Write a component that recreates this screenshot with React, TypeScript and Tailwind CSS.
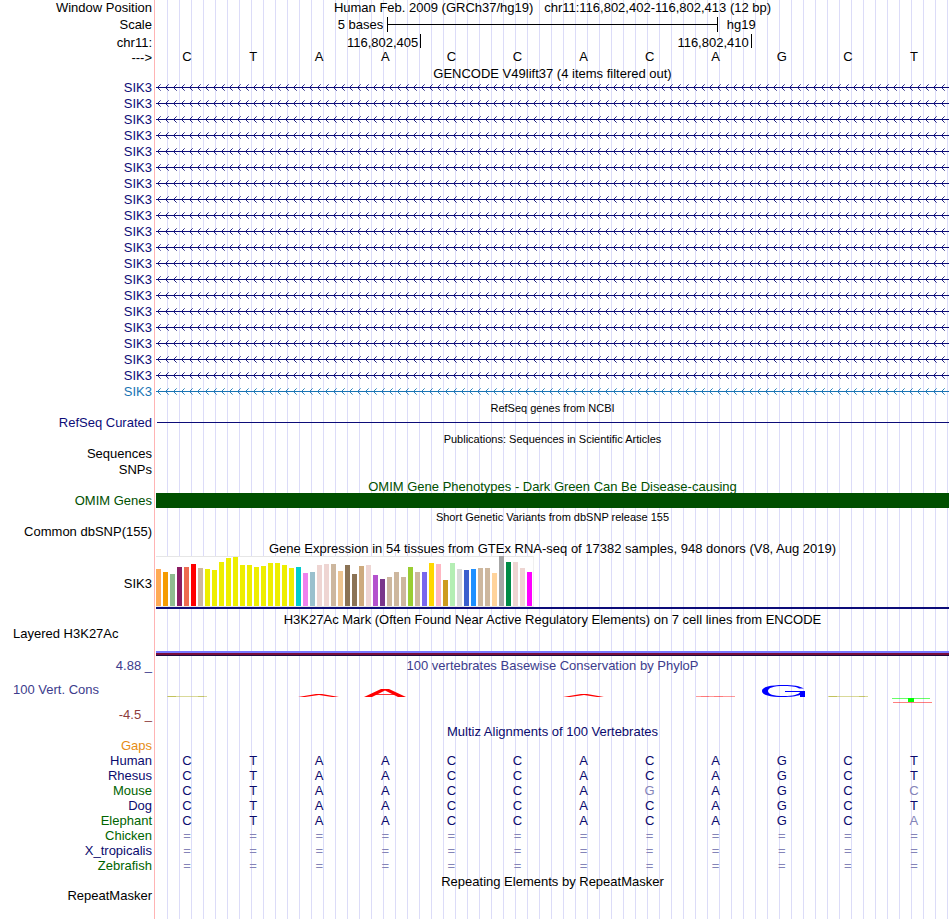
import React from 'react'

const bases = ["C","T","A","A","C","C","A","C","A","G","C","T"]

// one row per SIK3 transcript, the last one is non-coding
const transcripts = Array.from({ length: 20 }, (_, i) => (i === 19 ? "#1874b4" : "#0c0c78"))

const tissues: [number, string][] = [
  [37,"#ffaa55"],[34,"#f59b00"],[32,"#8fbc8f"],[39,"#8b1c62"],[39,"#ee6a50"],[42,"#ff0000"],
  [38,"#cdb79e"],[37,"#eeee00"],[36,"#eeee00"],[44,"#eeee00"],[48,"#eeee00"],[49,"#eeee00"],
  [41,"#eeee00"],[41,"#eeee00"],[39,"#eeee00"],[40,"#eeee00"],[43,"#eeee00"],[43,"#eeee00"],
  [41,"#eeee00"],[38,"#eeee00"],[39,"#00cdcd"],[33,"#ee82ee"],[34,"#9ac0cd"],[41,"#eed5d2"],
  [42,"#eed5d2"],[42,"#cdb79e"],[35,"#eec591"],[41,"#8b7355"],[32,"#8b7355"],[40,"#cdaa7d"],
  [41,"#eed5d2"],[31,"#b452cd"],[27,"#7a378b"],[29,"#cdb79e"],[34,"#cdb79e"],[29,"#cdb79e"],
  [39,"#9acd32"],[34,"#cdb79e"],[34,"#7a67ee"],[43,"#ffd700"],[42,"#ffb6c1"],[26,"#cd9b1d"],
  [43,"#b4eeb4"],[37,"#d9d9d9"],[36,"#3a5fcd"],[37,"#1e90ff"],[38,"#cdb79e"],[38,"#cdb79e"],
  [33,"#ffd39b"],[50,"#a6a6a6"],[44,"#008b45"],[44,"#eed5d2"],[38,"#eed5d2"],[34,"#ff00ff"],
]

const navy = "text-[#0a0a6e]"
const green = "text-[#006400]"

const species = [
  { name: "Human", color: navy, seq: "CTAACCACAGCT" },
  { name: "Rhesus", color: navy, seq: "CTAACCACAGCT" },
  { name: "Mouse", color: green, seq: "CTAACCAGAGCC" },
  { name: "Dog", color: navy, seq: "CTAACCACAGCT" },
  { name: "Elephant", color: green, seq: "CTAACCACAGCA" },
  { name: "Chicken", color: green, seq: "============" },
  { name: "X_tropicalis", color: navy, seq: "============" },
  { name: "Zebrafish", color: green, seq: "============" },
]

function Row({ label, labelClass = "", className = "h-4", children }: {
  label?: React.ReactNode
  labelClass?: string
  className?: string
  children?: React.ReactNode
}) {
  return (
    <div className={`flex ${className}`}>
      <div className={`w-[156px] shrink-0 pr-1 text-right ${labelClass}`}>{label}</div>
      <div className="min-w-0 flex-1">{children}</div>
    </div>
  )
}

function Title({ children, className = "h-[15px] leading-[15px]", label, labelClass }: {
  children: React.ReactNode
  className?: string
  label?: string
  labelClass?: string
}) {
  return (
    <Row className={className} label={label} labelClass={labelClass}>
      <h2 className="whitespace-pre text-center">{children}</h2>
    </Row>
  )
}

// intron line with strand arrows pointing left
function Intron({ color, id }: { color: string; id: string }) {
  return (
    <svg className="block h-4 w-full" shapeRendering="crispEdges">
      <defs>
        <pattern id={id} width="8" height="16" patternUnits="userSpaceOnUse">
          <path d="M2 6h1v1h-1zM2 8h1v1h-1zM3 5h1v1h-1zM3 9h1v1h-1z" fill={color} fillOpacity="0.9" />
          <path d="M4 4h1v1h-1zM4 10h1v1h-1z" fill={color} fillOpacity="0.6" />
        </pattern>
      </defs>
      <rect width="100%" height="16" fill={`url(#${id})`} />
      <rect y="7" width="100%" height="1" fill={color} />
    </svg>
  )
}

// conservation score marks, one drawing per base
function Mark({ index }: { index: number }) {
  return (
    <svg className="h-[49px] w-12 shrink-0" viewBox="0 0 48 49" fill="none">
      {(index === 0 || index === 10) && (
        <>
          <line x1="3" x2="43" y1="22.5" y2="22.5" stroke="#b4b432" strokeOpacity="0.5" />
          <line x1="4" x2="12" y1="22.5" y2="22.5" stroke="#a0a000" strokeOpacity="0.4" />
          <line x1="34" x2="40" y1="22.5" y2="22.5" stroke="#a0a000" strokeOpacity="0.3" />
        </>
      )}
      {(index === 2 || index === 6) && (
        <polygon points="2,23 20,20 26,20 43,23 36,23 23,21 9,23" fill="#ff0000" />
      )}
      {index === 3 && (
        <>
          <polygon points="2,23 19,15 27,15 44,23 36,23 23,16.5 10,23" fill="#ff0000" />
          <line x1="14" x2="32" y1="20.5" y2="20.5" stroke="#ff0000" strokeOpacity="0.8" />
        </>
      )}
      {index === 8 && (
        <>
          <line x1="3" x2="42" y1="22.5" y2="22.5" stroke="#ff0000" strokeOpacity="0.4" />
          <line x1="8" x2="16" y1="22.5" y2="22.5" stroke="#ff0000" strokeOpacity="0.2" />
          <line x1="21" x2="30" y1="22.5" y2="22.5" stroke="#ff0000" strokeOpacity="0.2" />
        </>
      )}
      {index === 9 && (
        <path
          fill="#0000ff"
          fillRule="evenodd"
          d="M45 14.500C41 12 34 11 25 11C11 11 3 13 3 17C3 21 11 23 24 23C32 23 37 22.300 41 21V23H46V17H26V18H41C40 20.500 34 22 25 22C14 22 9 20 9 17C9 14 14 12 25 12C34 12 38 13 40 14.500Z"
        />
      )}
      {index === 11 && (
        <>
          <line x1="1" x2="39" y1="24.5" y2="24.5" stroke="#00ff00" strokeOpacity="0.6" />
          <rect x="17" y="24" width="6" height="4" fill="#00ff00" />
          <line x1="2" x2="41" y1="28.5" y2="28.5" stroke="#ff0000" strokeOpacity="0.5" />
        </>
      )}
    </svg>
  )
}

function App() {
  return (
    <main className="min-h-screen bg-white bg-[linear-gradient(90deg,#ffb4b4_1px,transparent_1px),repeating-linear-gradient(90deg,#dcdcf8_0px,#dcdcf8_1px,transparent_1px,transparent_12px)] bg-[position:154px_0,167px_0] bg-no-repeat pr-px font-['Liberation_Sans',Arial,sans-serif] text-[13px] leading-4 text-black">
      <Title className="h-4" label="Window Position">
        Human Feb. 2009 (GRCh37/hg19)   chr11:116,802,402-116,802,413 (12 bp)
      </Title>
      <Row className="h-[18px] leading-[18px]" label="Scale">
        <div className="flex">
          <div className="w-[29.17%] pr-1 text-right">5 bases</div>
          <div className="flex h-4 w-5/12 items-end">
            <div className="flex h-[15px] w-full items-center border-x border-black">
              <div className="h-px w-full bg-black" />
            </div>
          </div>
          <div className="pl-[9px]">hg19</div>
        </div>
      </Row>
      <Row className="h-4 leading-[18px]" label="chr11:">
        <div className="flex">
          <div className="w-1/3 pr-0.5 text-right">116,802,405</div>
          <div className="h-[14px] w-5/12 border-l border-black pr-0.5 text-right">116,802,410</div>
          <div className="h-[14px] border-l border-black" />
        </div>
      </Row>
      <Row label="--->">
        <div className="grid grid-cols-12 text-center leading-[14px]">
          {bases.map((base, i) => (
            <span key={i} className="pr-1">{base}</span>
          ))}
        </div>
      </Row>

      <Title className="h-[14px] leading-4">GENCODE V49lift37 (4 items filtered out)</Title>
      {transcripts.map((color, i) => (
        <Row key={i} label="SIK3" labelClass={i === 19 ? "text-[#1874b4]" : "text-[#0c0c78]"}>
          <Intron color={color} id={`intron-${i}`} />
        </Row>
      ))}

      <Title className="h-[15px] text-[11px] leading-4">RefSeq genes from NCBI</Title>
      <Row label="RefSeq Curated" labelClass="text-[#0c0c78]">
        <div className="ml-px pt-[7px]">
          <div className="h-px bg-[#0c0c78]" />
        </div>
      </Row>

      <Title className="h-[15px] text-[11px] leading-4">Publications: Sequences in Scientific Articles</Title>
      <Row label="Sequences" />
      <Row label="SNPs" />

      <Title className="h-[15px] leading-[18px] text-[#005000]">OMIM Gene Phenotypes - Dark Green Can Be Disease-causing</Title>
      <Row className="h-[15px] leading-[15px]" label="OMIM Genes" labelClass="text-[#005000]">
        <div className="h-full bg-[#005000]" />
      </Row>

      <Title className="h-4 text-[11px] leading-[18px]">Short Genetic Variants from dbSNP release 155</Title>
      <Row label="Common dbSNP(155)" />

      <Title className="h-4 leading-[18px]">Gene Expression in 54 tissues from GTEx RNA-seq of 17382 samples, 948 donors (V8, Aug 2019)</Title>
      <Row className="h-[53px] leading-[55px]" label="SIK3">
        <div className="h-full border-b-2 border-[#0c0c78]">
          <div className="flex h-[51px] w-[378px] items-end gap-0.5 border-y border-r border-y-[#e6e6e6] border-r-[#f0f0f0] bg-white">
            {tissues.map(([height, color], i) => (
              <div key={i} className="w-[5px] shrink-0" style={{ height, backgroundColor: color }} />
            ))}
          </div>
        </div>
      </Row>

      <Title className="h-[18px] leading-[22px]">H3K27Ac Mark (Often Found Near Active Regulatory Elements) on 7 cell lines from ENCODE</Title>
      <Row
        className="h-[29px] leading-[14px]"
        label={<div className="pl-[13px] text-left">Layered H3K27Ac</div>}
      >
        <div className="flex h-full flex-col justify-end">
          <div className="h-0.5 bg-[#7878ff]" />
          <div className="h-0.5 bg-[#780a3c]" />
          <div className="h-px bg-[#1e0a3c]" />
        </div>
      </Row>

      <Title className="h-[18px] leading-5 text-[#3c3c8c]" label="4.88 _">
        100 vertebrates Basewise Conservation by PhyloP
      </Title>
      <Row
        className="h-[49px]"
        label={
          <div className="flex h-full flex-col justify-between pt-2">
            <div className="pl-[13px] text-left text-[#3c3c8c]">100 Vert. Cons</div>
            <div className="text-[#8c3c3c]">-4.5 _</div>
          </div>
        }
      >
        <div className="grid grid-cols-12">
          {bases.map((_, i) => (
            <div key={i} className="flex justify-center pr-0.5">
              <Mark index={i} />
            </div>
          ))}
        </div>
      </Row>

      <Title className="h-[15px] leading-[18px] text-[#0a0a6e]">Multiz Alignments of 100 Vertebrates</Title>
      <table className="w-full table-fixed border-collapse leading-[15px]">
        <tbody>
          <tr>
            <th scope="row" className="w-[156px] p-0 pr-1 text-right font-normal text-[#e68c14]">Gaps</th>
            <td colSpan={12} />
          </tr>
          {species.map((s) => (
            <tr key={s.name}>
              <th scope="row" className={`p-0 pr-1 text-right font-normal ${s.color}`}>{s.name}</th>
              {s.seq.split("").map((base, i) => (
                <td
                  key={i}
                  className={`p-0 pr-1 text-center ${base === bases[i] ? "text-[#0a0a6e]" : "text-[#8484b8]"}`}
                >
                  {base}
                </td>
              ))}
            </tr>
          ))}
        </tbody>
      </table>

      <Title className="h-[15px] leading-[18px]">Repeating Elements by RepeatMasker</Title>
      <Row label="RepeatMasker" />
    </main>
  )
}

export default App
